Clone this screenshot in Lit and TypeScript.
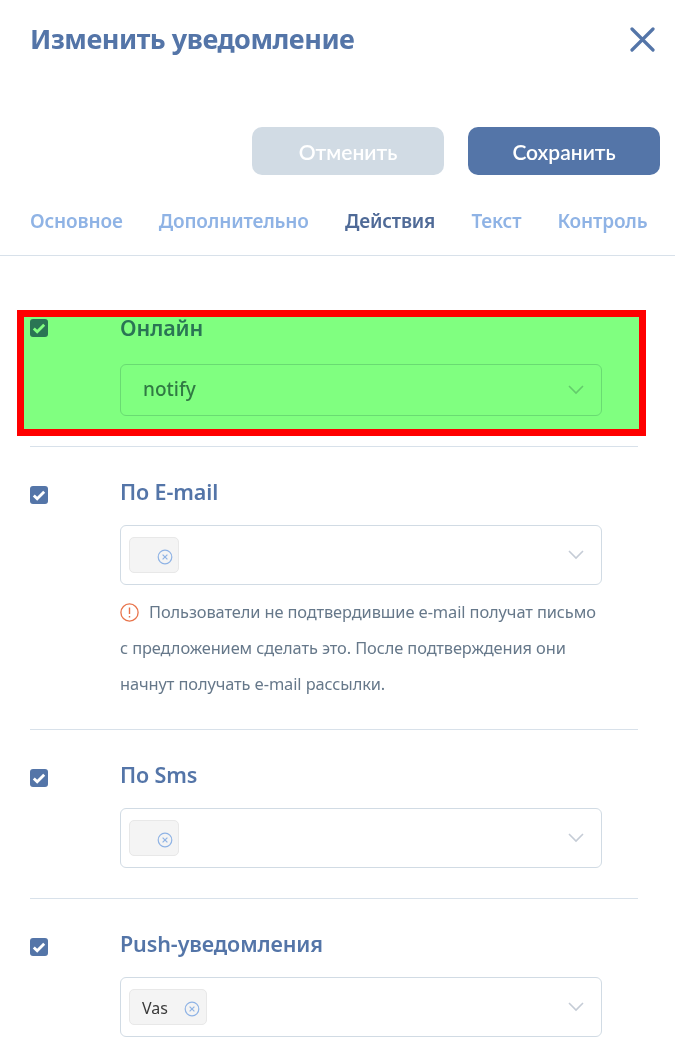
import { LitElement, html, css } from "lit";
import { customElement } from "lit/decorators.js";

const check = html`<svg class="cb" viewBox="0 0 18 18" width="18" height="18"><rect width="18" height="18" rx="3" fill="#5475a8"/><path d="M3.8 9.4 7.2 12.8 14.2 5.8" fill="none" stroke="#fff" stroke-width="2.8"/></svg>`;
const chevron = html`<svg class="chev" viewBox="0 0 18 10" width="18" height="10"><path d="M2 1 9 8 16 1" fill="none" stroke="currentColor" stroke-width="1.6"/></svg>`;
const clear = html`<svg class="clear" viewBox="0 0 16 16" width="16" height="16"><circle cx="8" cy="8" r="6.8" fill="none" stroke="#8fb3e5" stroke-width="1.2"/><path d="M5.6 5.6 10.4 10.4M10.4 5.6 5.6 10.4" stroke="#8fb3e5" stroke-width="1.2"/></svg>`;

@customElement("app-root")
export class AppRoot extends LitElement {
  static styles = css`
    :host { display: block; width: 675px; height: 1064px; overflow: hidden; background: #fff; font-family: "Noto Sans", "Open Sans", sans-serif; color: #5475a8; }
    .head { display: flex; justify-content: space-between; align-items: center; padding: 21px 20px 0 30px; height: 37px; }
    h1 { margin: 0; padding-bottom: 2px; font-size: 27px; font-weight: 700; line-height: 35px; letter-spacing: -0.48px; }
    .actions { display: flex; justify-content: flex-end; gap: 24px; padding: 69px 15px 0 0; }
    button { width: 192px; height: 48px; border: 0; border-radius: 10px; background: #5475a8; color: #fff; font: 600 21px "Lato", "Noto Sans", sans-serif; padding: 0; }
    button.off { background: #d1dbe4; }
    .tabs { display: flex; gap: 36.2px; padding: 31px 0 0 30px; height: 49px; border-bottom: 1px solid #d8e1ea; font-size: 19px; font-weight: 600; line-height: 30px; letter-spacing: -0.16px; color: #8fb3e5; white-space: nowrap; }
    .tabs .on { color: #4f6a97; }
    section { position: relative; display: grid; grid-template-columns: 90px 482px; margin: 0 37px 0 30px; padding: 34px 0 30px; border-bottom: 1px solid #d8e1ea; }
    section.first { padding-top: 61px; }
    .cb { display: block; margin-top: 5px; }
    .first .cb { margin-top: 2px; }
    .label { padding-bottom: 2px; font-size: 21.5px; font-weight: 600; line-height: 22px; letter-spacing: -0.1px; margin-bottom: 20px; }
    .first .label { margin-bottom: 23px; }
    .select { box-sizing: border-box; display: flex; align-items: center; justify-content: space-between; height: 60px; padding: 0 16px 0 8px; border: 1px solid #d1dbe4; border-radius: 6px; }
    .select.single { height: 52px; padding-left: 22px; font-size: 19px; font-weight: 500; }
    .single span { padding-bottom: 2px; color: #5f7a85; }
    .chev { color: #c5ccd6; display: block; }
    .chip { box-sizing: border-box; display: flex; align-items: center; justify-content: flex-end; gap: 16.5px; height: 36px; min-width: 50px; padding: 0 5.5px 0 12px; background: #f4f4f4; border: 1px solid #e8e8e8; border-radius: 5px; color: #3a3a3a; font-size: 16px; }
    .chip span { padding-top: 2px; }
    .clear { display: block; margin-top: 4px; }
    .note { margin: 9px 0 -3px; font-size: 16.4px; line-height: 36px; color: #66788a; letter-spacing: -0.1px; }
    .warn { vertical-align: -4px; margin-right: 10px; }
    .mark { position: absolute; left: -13px; right: -8px; top: 54px; height: 112px; border: 7px solid #f00; }
    .mark::before { content: ""; position: absolute; inset: 0; background: #80ff80; mix-blend-mode: multiply; }
  `;

  private row(label: string, chip?: string) {
    return html`<section>
      <div>${check}</div>
      <div>
        <div class="label">${label}</div>
        <div class="select"><div class="chip">${chip ? html`<span>${chip}</span>` : ""}${clear}</div>${chevron}</div>
      </div>
    </section>`;
  }

  render() {
    return html`
      <div class="head">
        <h1>Изменить уведомление</h1>
        <svg viewBox="0 0 25 25" width="25" height="25"><path d="M2 2 23 23M23 2 2 23" stroke="#5475a8" stroke-width="3.2" stroke-linecap="round"/></svg>
      </div>
      <div class="actions"><button class="off">Отменить</button><button>Сохранить</button></div>
      <div class="tabs"><span>Основное</span><span>Дополнительно</span><span class="on">Действия</span><span>Текст</span><span>Контроль</span></div>
      <section class="first">
        <div>${check}</div>
        <div>
          <div class="label">Онлайн</div>
          <div class="select single"><span>notify</span>${chevron}</div>
        </div>
        <div class="mark"></div>
      </section>
      <section>
        <div>${check}</div>
        <div>
          <div class="label">По E-mail</div>
          <div class="select"><div class="chip">${clear}</div>${chevron}</div>
          <p class="note"><svg class="warn" viewBox="0 0 19 19" width="19" height="19"><circle cx="9.5" cy="9.5" r="8.6" fill="none" stroke="#e8734a" stroke-width="1.3"/><path d="M9.5 4.6V11M9.5 13V14.6" stroke="#e8734a" stroke-width="1.4"/></svg>Пользователи не подтвердившие e-mail получат письмо с предложением сделать это. После подтверждения они начнут получать e-mail рассылки.</p>
        </div>
      </section>
      ${this.row("По Sms")}
      ${this.row("Push-уведомления", "Vas")}
    `;
  }
}
